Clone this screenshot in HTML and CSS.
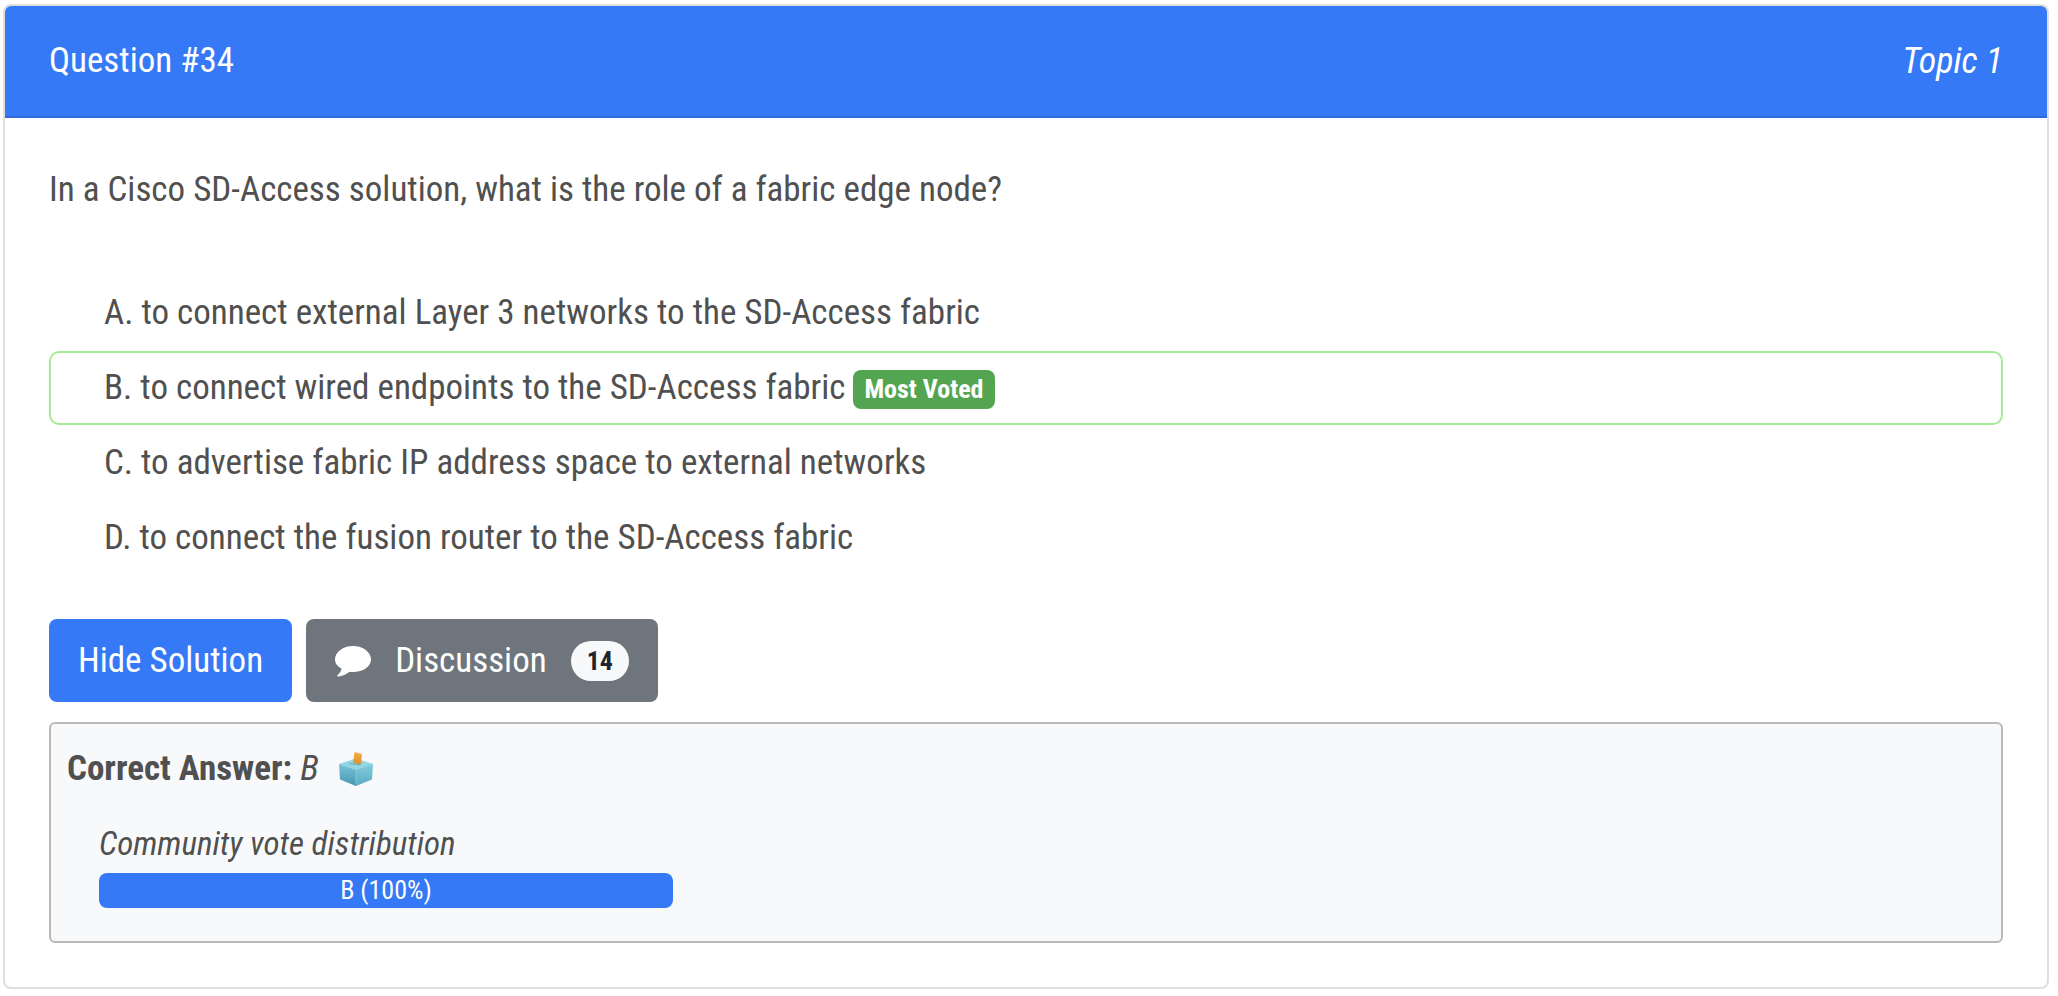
FILE: index.html
```html
<!DOCTYPE html>
<html lang="en">
<head>
<meta charset="utf-8">
<title>Question #34</title>
<link rel="stylesheet" href="styles.css">
</head>
<body>
<article class="card">
  <header class="card-header">
    <span>Question #34</span>
    <em class="topic">Topic 1</em>
  </header>
  <div class="card-body">
    <p class="question">In a Cisco SD-Access solution, what is the role of a fabric edge node?</p>
    <ul class="choices">
      <li class="choice">A. to connect external Layer 3 networks to the SD-Access fabric</li>
      <li class="choice voted">B. to connect wired endpoints to the SD-Access fabric <span class="voted-badge">Most Voted</span></li>
      <li class="choice">C. to advertise fabric IP address space to external networks</li>
      <li class="choice">D. to connect the fusion router to the SD-Access fabric</li>
    </ul>
    <div class="actions">
      <button class="btn btn-primary" type="button">Hide Solution</button>
      <button class="btn btn-secondary" type="button">
        <svg class="comment-icon" viewBox="0 0 36 31" aria-hidden="true"><path fill="#fff" d="M18 0C8 0 0 6 0 13.500C0 17.500 2.500 20.500 6.500 22.500C6.500 25 4.500 27.500 2.800 28.700C1.800 29.500 2.500 31 4 30.500C8 30 12 27.500 14.500 25.700Q16.200 26 18 26C28 26 36 20.500 36 13.500C36 6 28 0 18 0Z"/></svg>
        <span>Discussion</span>
        <span class="count">14</span>
      </button>
    </div>
    <section class="answer">
      <div class="answer-line">
        <span><strong>Correct Answer:</strong> <em>B</em></span>
        <svg class="ballot-icon" viewBox="0 0 34 34" role="img" aria-label="Ballot box">
          <defs>
            <linearGradient id="left" x2="0" y2="1"><stop stop-color="#78c4d8"/><stop offset="1" stop-color="#4795b1"/></linearGradient>
            <linearGradient id="right" x2="0" y2="1"><stop stop-color="#82ccdd"/><stop offset="1" stop-color="#5aabc4"/></linearGradient>
            <linearGradient id="paper" x2="0" y2="1"><stop stop-color="#f5b14c"/><stop offset="1" stop-color="#df8c27"/></linearGradient>
          </defs>
          <path fill="#92d5e3" d="M0 12L17 6.500L34 12L17 17.500Z"/>
          <path fill="url(#left)" d="M0 12L17 17.500V34L1 27.500Z"/>
          <path fill="url(#right)" d="M34 12L17 17.500V34L33 27.500Z"/>
          <path fill="none" stroke="#93d3e0" stroke-width="0.700" d="M0.500 12L17 17.500L33.500 12M17 17.500V32"/>
          <path fill="#71aeb9" d="M11 11L22 12L20 13.500L10 12Z"/>
          <path fill="url(#paper)" d="M15.500 0L23 2L22 12.500L14 10.500Z"/>
        </svg>
      </div>
      <div class="votes">
        <em class="votes-title">Community vote distribution</em>
        <div class="vote-bar">B (100%)</div>
      </div>
    </section>
  </div>
</article>
</body>
</html>
```
FILE: styles.css
```css
* { box-sizing: border-box; }
body {
  margin: 0;
  padding: 4px 9px 4px 3px;
  background: #fff;
  color: #505050;
  font-family: "Roboto Condensed", "Liberation Sans Narrow", Roboto, sans-serif;
  font-size: 35px;
  line-height: 54px;
}
.card {
  border: 2px solid #dfdfdf;
  border-radius: 8px;
  overflow: hidden;
}
.card-header {
  display: flex;
  justify-content: space-between;
  padding: 28px 44px;
  border-bottom: 2px solid #2f6bdc;
  background: #3579f7;
  color: #fff;
}
.topic { font-size: 36px; }
.card-body { padding: 45px 44px 44px; }
.question { margin: 0 0 59px; }
.choices {
  margin: 0 0 44px;
  padding: 0;
  list-style: none;
}
.choice {
  padding: 8px 53px;
  border: 2px solid transparent;
  border-radius: 10px;
}
.choice + .choice { margin-top: 1px; }
.choice.voted { border-color: #a6ec98; }
.voted-badge {
  display: inline-block;
  padding: 6px 11px;
  border-radius: 8px;
  background: #54a552;
  color: #fff;
  font-size: 26px;
  font-weight: 700;
  line-height: 27px;
  vertical-align: middle;
}
.actions {
  display: flex;
  flex-wrap: wrap;
  gap: 14px;
  margin-bottom: 20px;
}
.btn {
  display: flex;
  align-items: center;
  padding: 15px 29px 14px;
  border: 0;
  border-radius: 8px;
  color: #fff;
  font: inherit;
}
.btn-primary { background: #3579f7; }
.btn-secondary {
  gap: 24px;
  background: #6e757c;
}
.comment-icon {
  width: 36px;
  height: 31px;
}
.count {
  padding: 6px 16px;
  border-radius: 20px;
  background: #f8f9fb;
  color: #212529;
  font-size: 26px;
  font-weight: 700;
  line-height: 28px;
}
.answer {
  padding: 18px 16px 33px;
  border: 2px solid #b9b9b9;
  border-radius: 6px;
  background: #f8f9fb;
}
.answer-line {
  display: flex;
  align-items: center;
  gap: 20px;
}
.ballot-icon {
  width: 34px;
  height: 34px;
}
.votes { padding: 24px 32px 0; }
.votes-title {
  display: block;
  margin-bottom: 5px;
  font-size: 33px;
  line-height: 48px;
}
.vote-bar {
  max-width: 574px;
  border-radius: 8px;
  background: #3579f7;
  color: #fff;
  font-size: 26px;
  line-height: 35px;
  text-align: center;
}
```
